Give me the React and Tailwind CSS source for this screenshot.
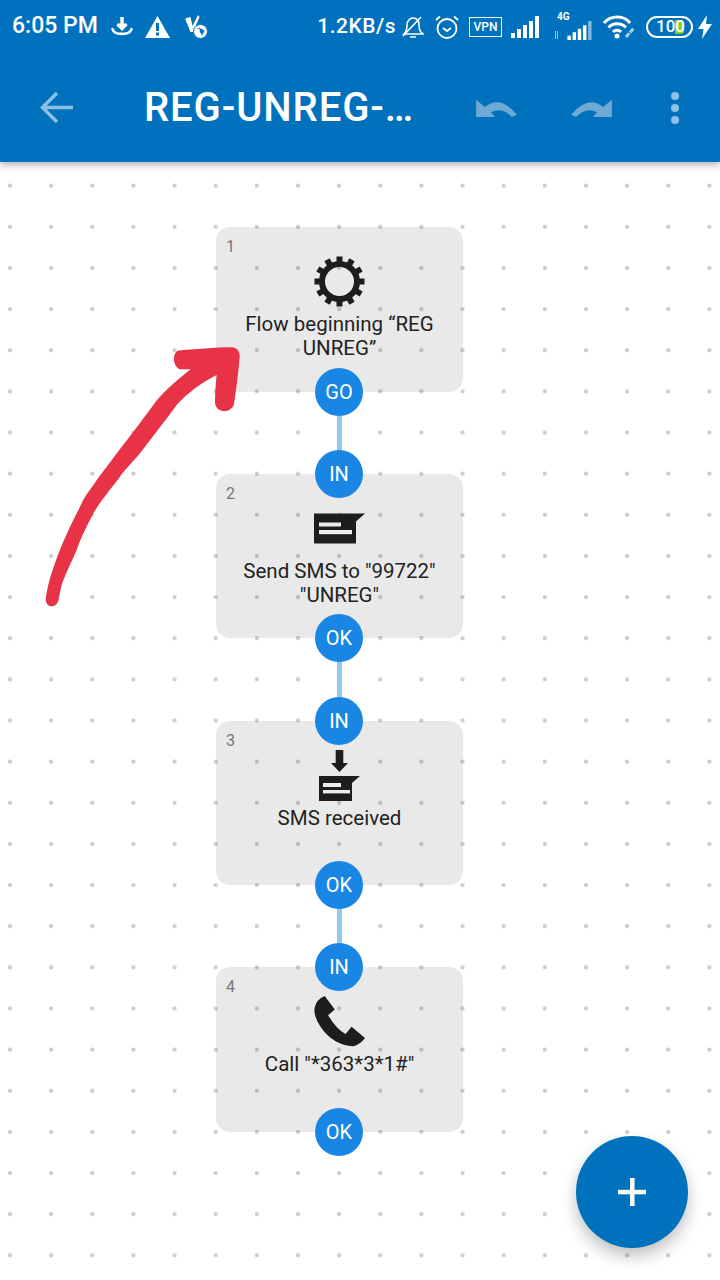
import React from "react";

const SmsIcon = () => (
  <svg width="51" height="51" viewBox="0 0 51 51">
    <path d="M0 10.5H51L42 18.5V40.5H0Z" fill="#1d1d1d" />
    <rect x="5" y="19.5" width="22" height="4" fill="#ececec" />
    <rect x="5" y="27" width="33" height="4.2" fill="#ececec" />
  </svg>
);

const GearIcon = () => (
  <svg width="51" height="51" viewBox="0 0 51 51">
    <circle cx="25.5" cy="25.5" r="17.5" fill="none" stroke="#1d1d1d" strokeWidth="6" />
    {[0, 30, 60, 90, 120, 150, 180, 210, 240, 270, 300, 330].map((a) => (
      <rect key={a} x="22.5" y="0.5" width="6" height="8" fill="#1d1d1d" transform={`rotate(${a} 25.5 25.5)`} />
    ))}
  </svg>
);

const SmsInIcon = () => (
  <svg width="51" height="51" viewBox="0 0 51 51">
    <path d="M21.7 0H29.3V13H34L25.5 22L17 13H21.7Z" fill="#1d1d1d" />
    <path d="M5 26H46L38 33V51H5Z" fill="#1d1d1d" />
    <rect x="9" y="33" width="18" height="4" fill="#ececec" />
    <rect x="9" y="40" width="27" height="3.4" fill="#ececec" />
  </svg>
);

const PhoneIcon = () => (
  <svg width="51" height="51" viewBox="343 140 152 152">
    <path
      d="M345 175Q350 150 375 140L405 180L385 197Q410 240 437 253L455 232L495 265Q480 285 460 290Q400 285 365 235Q340 200 345 175Z"
      fill="#1d1d1d"
    />
  </svg>
);

const SignalBars = ({ w = 28, h = 22, last = "#fff" }) => (
  <svg width={w} height={h} viewBox="0 0 28 22" fill="#fff">
    <rect x="0" y="17" width="4" height="5" />
    <rect x="6" y="13" width="4" height="9" />
    <rect x="12" y="9" width="4" height="13" />
    <rect x="18" y="5" width="4" height="17" />
    <rect x="24" y="0" width="4" height="22" fill={last} />
  </svg>
);

const Port = ({ label, className }) => (
  <div className={`absolute left-[99px] flex h-12 w-12 items-center justify-center rounded-full bg-[#1a86e3] text-[20px] text-white ${className}`}>
    {label}
  </div>
);

const steps = [
  { n: 1, icon: <GearIcon />, text: "Flow beginning “REG UNREG”" },
  { n: 2, icon: <SmsIcon />, text: 'Send SMS to "99722" "UNREG"' },
  { n: 3, icon: <SmsInIcon />, text: "SMS received" },
  { n: 4, icon: <PhoneIcon />, text: 'Call "*363*3*1#"' },
];

const FlowCard = ({ step, isLast }) => (
  <div className="relative h-[164.5px] w-[247px] rounded-[14px] bg-black/[0.085]">
    <span className="absolute left-[10px] top-[8px] text-[16px] text-[#777]">{step.n}</span>
    {!isLast && <div className="absolute left-[120.5px] top-full h-[83px] w-[5px] bg-[#90caf1]" />}
    {step.n > 1 && <Port label="IN" className="-top-6" />}
    <Port label={step.n === 1 ? "GO" : "OK"} className="-bottom-6" />
    <div className="flex flex-col items-center pt-[29px]">
      {step.icon}
      <p className="mt-[5px] px-[20px] text-center text-[20.5px] leading-[24px] text-[#222]">{step.text}</p>
    </div>
  </div>
);

export default function App() {
  return (
    <div className="relative h-[1280px] w-[720px] overflow-hidden bg-white font-['Roboto',sans-serif]">
      <header className="relative z-10 h-[162px] bg-[#0071bc] shadow-[0_3px_7px_rgba(0,0,0,0.3)]">
        <div className="flex h-[53px] items-center justify-between pl-[12px] pr-[8px] text-white">
          <div className="flex items-center">
            <span className="text-[23px] font-medium">6:05 PM</span>
            <svg className="ml-[13px]" width="22" height="22" viewBox="0 0 22 22" fill="none" stroke="#fff">
              <path d="M11 1V12M6.5 8L11 12.5L15.5 8" strokeWidth="3.4" />
              <path d="M1.5 13C3 19.5 19 19.5 20.5 13" strokeWidth="2.6" strokeLinecap="round" />
            </svg>
            <svg className="ml-[12px]" width="25" height="22" viewBox="0 0 25 22">
              <path d="M12.5 0L25 22H0Z" fill="#fff" />
              <rect x="11" y="7" width="3" height="8" fill="#0071bc" />
              <rect x="11" y="16.5" width="3" height="3" fill="#0071bc" />
            </svg>
            <svg className="ml-[15px]" width="23" height="24" viewBox="0 0 23 24" fill="#fff">
              <path d="M0 3.5L5.5 2L7.5 11L13 0L14.5 2L8 17H5.5Z" />
              <circle cx="15.5" cy="16.5" r="7" stroke="#0071bc" strokeWidth="1" />
              <path d="M11 14L15 12.5L14.5 16L17 20.5L19.5 16L16.5 13.5" fill="#0071bc" />
            </svg>
          </div>
          <div className="flex items-center">
            <span className="text-[21px] font-medium tracking-[0.5px]">1.2KB/s</span>
            <svg className="ml-[6px]" width="22" height="24" viewBox="0 0 22 24" fill="none" stroke="#fff" strokeWidth="1.6">
              <path d="M2 19C5 16 5 13 5 10C5 6 8 3 11 3C15 3 17 6 17 10C17 13 18 17 21 19Z" />
              <path d="M8 22H14M1 21L19 2" />
            </svg>
            <svg className="ml-[11px]" width="24" height="24" viewBox="0 0 24 24" fill="none" stroke="#fff" strokeWidth="1.8">
              <circle cx="12" cy="13.5" r="9.5" />
              <path d="M8 13L12 16L16 13M1 5L5 1.5M23 5L19 1.5" />
            </svg>
            <div className="ml-[10px] flex h-[20px] w-[33px] items-center justify-center border-[1.5px] border-white text-[12px] font-medium leading-none">
              VPN
            </div>
            <div className="ml-[9px]">
              <SignalBars />
            </div>
            <div className="relative ml-[16px] mt-[2px] h-[24px] w-[38px]">
              <span className="absolute -top-[4px] left-[2px] text-[10px] font-bold leading-none">4G</span>
              <div className="absolute bottom-0 right-0">
                <SignalBars w={27} h={19} last="#7fb8de" />
              </div>
              <span className="absolute bottom-[1px] left-0 h-[8px] w-[3px] border-x border-white/60" />
            </div>
            <svg className="ml-[10px]" width="33" height="24" viewBox="0 0 33 24" fill="none" stroke="#fff" strokeWidth="3">
              <path d="M1 8C8 0 21 0 27 8M5.5 12.5C10 7.5 18 7.5 23 12.5M10 17C12 14.5 16 14.5 18 17" />
              <circle cx="14" cy="21" r="2.5" fill="#fff" stroke="none" />
              <path d="M23 22L31 13" strokeWidth="3" stroke="#a9d0ea" strokeDasharray="5 1" />
            </svg>
            <div className="relative ml-[10px] flex h-[22px] w-[47px] items-center overflow-hidden rounded-full border-2 border-white">
              <span className="absolute left-[27px] top-[2px] h-[14px] w-[9px] rounded-r-[3px] bg-[#7ed321]" />
              <span className="relative ml-[8px] text-[17px] font-medium leading-none">100</span>
            </div>
            <svg className="ml-[5px]" width="14" height="24" viewBox="0 0 14 24" fill="#fff">
              <path d="M9 0L0 14H5.5L4 24L14 9H8Z" />
            </svg>
          </div>
        </div>

        <div className="flex h-[109px] items-center">
          <svg className="ml-[40px]" width="33" height="33" viewBox="0 0 33 33" fill="none" stroke="#8dc0e2" strokeWidth="3.4">
            <path d="M33 16.5H3M17 2L2.5 16.5L17 31" />
          </svg>
          <h1 className="ml-[71px] w-[271px] whitespace-nowrap text-[40px] font-medium leading-none tracking-[0.9px] text-white">
            REG-UNREG-…
          </h1>
          <svg className="ml-[61px]" width="41" height="20" viewBox="348 285 122 60" fill="#6eaad5">
            <path d="M348 290L374 312Q420 275 470 335L455 342Q425 310 392 328L405 342H348Z" />
          </svg>
          <svg className="ml-[54px] -scale-x-100" width="41" height="20" viewBox="348 285 122 60" fill="#6eaad5">
            <path d="M348 290L374 312Q420 275 470 335L455 342Q425 310 392 328L405 342H348Z" />
          </svg>
          <div className="ml-[59px] flex flex-col gap-[4px]">
            <span className="h-[8px] w-[8px] rounded-full bg-[#8dc0e2]" />
            <span className="h-[8px] w-[8px] rounded-full bg-[#8dc0e2]" />
            <span className="h-[8px] w-[8px] rounded-full bg-[#8dc0e2]" />
          </div>
        </div>
      </header>

      <main className="h-[1118px] bg-[radial-gradient(circle,#cdcdcd_1.8px,transparent_2.4px)] bg-[size:41.15px_41.15px] bg-[position:-10.6px_3.1px] pl-[216px] pt-[65px]">
        <div className="flex flex-col gap-[82.3px]">
          {steps.map((s, i) => (
            <FlowCard key={s.n} step={s} isLast={i === steps.length - 1} />
          ))}
        </div>
      </main>

      {/* hand drawn arrow on top of the screenshot */}
      <svg className="absolute left-[30px] top-[330px] z-20" width="220" height="290" viewBox="0 0 660 870">
        <path
          d="M47 810C50 780 60 740 75 700C95 640 125 580 150 530C160 505 175 485 195 458C225 415 300 320 370 225C395 190 430 160 482 118H450C430 112 425 75 442 62C490 58 560 52 605 52C620 52 630 65 629 80C625 130 618 180 612 222C605 250 560 252 555 220C555 190 557 160 560 135C520 155 470 190 440 225C400 280 360 330 330 370C300 405 280 425 270 440C240 480 210 515 190 550C165 600 150 630 140 660C120 705 105 735 95 765C90 785 88 800 85 812C78 835 50 835 47 810Z"
          fill="#e83346"
        />
      </svg>

      <button className="absolute left-[576px] top-[1136px] z-20 flex h-[112px] w-[112px] items-center justify-center rounded-full bg-[#0071bc] shadow-[0_8px_16px_rgba(0,0,0,0.25)]">
        <svg width="28" height="28" viewBox="0 0 28 28" fill="#fff">
          <rect x="12" y="0" width="4.5" height="28" />
          <rect x="0" y="11.8" width="28" height="4.5" />
        </svg>
      </button>
    </div>
  );
}
